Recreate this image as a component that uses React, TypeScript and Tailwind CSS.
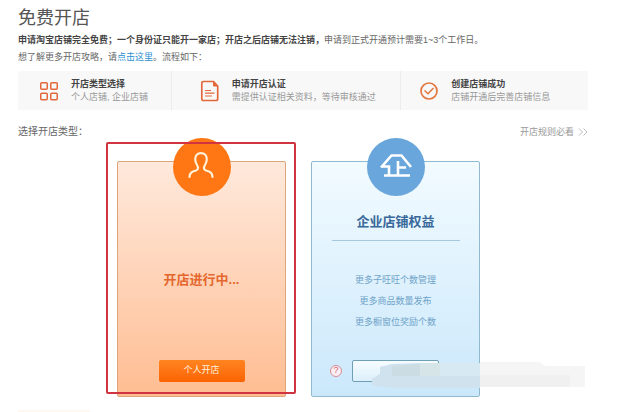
import type { ReactNode } from "react";

function GridIcon() {
  return (
    <svg viewBox="0 0 20 20" className="h-5 w-5 shrink-0" fill="none" stroke="#e2683c" strokeWidth="1.5">
      <rect x="1.75" y="1.75" width="6.5" height="6.5" rx="1" />
      <rect x="11.75" y="1.75" width="6.5" height="6.5" rx="1" />
      <rect x="1.75" y="12.25" width="6.5" height="6.5" rx="1" />
      <rect x="11.75" y="12.25" width="6.5" height="6.5" rx="1" />
    </svg>
  );
}

function DocumentIcon() {
  return (
    <svg viewBox="0 0 20 22" className="h-[22px] w-5 shrink-0" fill="none" stroke="#e2683c" strokeWidth="1.7">
      <path d="M13.5 1.5H3.5Q1.8 1.5 1.8 3.2V18.8Q1.8 20.5 3.5 20.5H16Q17.7 20.5 17.7 18.8V6Z" />
      <path d="M13.5 1.5V6H17.7Z" fill="#e2683c" strokeWidth="1" />
      <path d="M5 10.5H11M5 13.2H14.5M5 16H12" strokeWidth="1.2" />
    </svg>
  );
}

function DoneIcon() {
  return (
    <svg viewBox="0 0 20 20" className="h-5 w-5 shrink-0" fill="none" stroke="#e2763f" strokeWidth="1.7">
      <circle cx="10" cy="10" r="8" />
      <path d="M5.5 9.5L9 12.8L14.5 7" strokeWidth="1.5" />
    </svg>
  );
}

function Step({ icon, title, text, className }: { icon: ReactNode; title: string; text: string; className: string }) {
  return (
    <li className={`flex items-center border-[#ececec] ${className}`}>
      {icon}
      <div className="text-[9px] leading-[13px] whitespace-nowrap">
        <h2 className="font-bold text-[#444]">{title}</h2>
        <p className="text-[#999]">{text}</p>
      </div>
    </li>
  );
}

function Badge({ className, children }: { className: string; children: ReactNode }) {
  return (
    <div className={`-mt-6 flex size-[58px] shrink-0 items-center justify-center rounded-full ${className}`}>
      {children}
    </div>
  );
}

export default function App() {
  return (
    <main className="bg-white pt-2 pr-[53px] pl-[18px] font-['Liberation_Sans','Noto_Sans_CJK_SC',sans-serif] text-[9px] text-[#666]">
      <h1 className="text-lg leading-5 text-[#555]">免费开店</h1>
      <div className="mt-1 leading-[17px]">
        <p>
          <strong className="text-[#444]">申请淘宝店铺完全免费；一个身份证只能开一家店；开店之后店铺无法注销，</strong>
          申请到正式开通预计需要1~3个工作日。
        </p>
        <p>
          想了解更多开店攻略，请
          <a href="#guide" className="text-[#2b8fcf]">点击这里</a>
          。流程如下：
        </p>
      </div>

      <ol className="mt-[5px] grid h-[39px] grid-cols-[154fr_230fr_187fr] bg-[#f8f8f8]">
        <Step icon={<GridIcon />} title="开店类型选择" text="个人店铺, 企业店铺" className="gap-3 border-r pl-[21px]" />
        <Step icon={<DocumentIcon />} title="申请开店认证" text="需提供认证相关资料，等待审核通过" className="gap-3 border-r pl-7" />
        <Step icon={<DoneIcon />} title="创建店铺成功" text="店铺开通后完善店铺信息" className="gap-3 pl-[18px]" />
      </ol>

      <div className="mt-3 flex items-center justify-between leading-5">
        <p className="text-[10px]">选择开店类型：</p>
        <a href="#rules" className="flex items-center gap-1 text-[#999]">
          开店规则必看
          <svg viewBox="0 0 10 8" className="h-2 w-[10px]" fill="none" stroke="#bbb">
            <path d="M1 .5L4.5 4L1 7.5M5.5 .5L9 4L5.5 7.5" />
          </svg>
        </a>
      </div>

      <div className="mt-[19px] grid grid-cols-[169px_169px] gap-[25px] pl-[99px]">
        <section className="relative flex h-[236px] flex-col items-center rounded-xs border border-[#dda57c] bg-linear-to-b from-[#ffe9dc] to-[#ffbd92]">
          <Badge className="bg-[#fe7714]">
            <svg viewBox="0 0 26 28" className="mr-[2px] mb-1 h-7 w-[26px]" fill="none" stroke="#fff1d8" strokeWidth="2.2" strokeLinecap="round">
              <path d="M1.5 26C1.5 21 5 20.5 8 19.5C10.5 18.5 10.5 16.500 9 14C7.500 11.500 7.200 10 7.200 8C7.200 4.500 9.500 2.200 13 2.200S18.800 4.500 18.800 8C18.800 10 18.500 11.500 17 14C15.500 16.500 15.500 18.500 18 19.500C21 20.500 24.500 21 24.500 26" />
            </svg>
          </Badge>
          <p className="mt-[74px] text-[13px] leading-5 font-bold text-[#e4672f]">开店进行中...</p>
          <button type="button" className="mt-auto mb-[14px] h-[22px] w-[86px] rounded-xs bg-linear-to-b from-[#ff8420] to-[#fb6300] text-[#fff0dc]">
            个人开店
          </button>
          <div className="pointer-events-none absolute -top-5 -right-[11px] bottom-[2px] -left-[12px] rounded-xs border-2 border-[#cf3440]" />
        </section>

        <section className="relative flex h-[236px] flex-col items-center rounded-xs border border-[#93b9d0] bg-linear-to-b from-[#f2fbff] to-[#cbe8fb]">
          <Badge className="bg-[#69a6db]">
            <svg viewBox="0 0 32 26" className="mb-1 h-[26px] w-8" fill="none" stroke="#fff" strokeWidth="2.6">
              <path d="M1 15.5L11.5 3.5H21.500L31 15M2 14.500H9V23M18 9V23M18 15.500H26M4 23.500H30" />
            </svg>
          </Badge>
          <h2 className="mt-4 text-[13px] leading-5 font-bold text-[#38699a]">企业店铺权益</h2>
          <hr className="mt-2 w-32 border-[#a5c8dc]" />
          <ul className="mt-[29px] text-center leading-[21px] text-[#6fa3c9]">
            <li>更多子旺旺个数管理</li>
            <li>更多商品数量发布</li>
            <li>更多橱窗位奖励个数</li>
          </ul>
          <div className="mt-auto mb-[14px] flex w-full items-center gap-[10px] pl-[18px]">
            <button type="button" aria-label="帮助" className="flex size-3 items-center justify-center rounded-full border border-[#d58d98] bg-[#fbeef2] text-[#cf6574]">
              ?
            </button>
            <button type="button" aria-label="企业开店" className="h-[22px] w-[87px] rounded-xs border border-[#6f9fb5] bg-linear-to-b from-[#f6fcff] to-[#dceffb]" />
          </div>
          <svg viewBox="0 0 214 26" className="absolute top-[200px] left-[60px] h-[26px] w-[214px]" aria-hidden="true">
            <path d="M8 5L20 2L48 1H108V26H20L0 23V17L8 12Z" fill="#cfe2ee" />
            <path d="M20 4L48 2V14H20Z" fill="#cbdde3" />
            <path d="M48 1H68V14H48Z" fill="#d5e5e8" />
            <path d="M68 1H108V14H68Z" fill="#d7e9f2" />
            <path d="M108 0H168L173 4H213V25H108Z" fill="#f5f5f5" />
            <path d="M108 13H198V25H108Z" fill="#f0f0f0" />
          </svg>
        </section>
      </div>
      <div className="mt-[13px] h-[2px] w-[72px] bg-[#fff8f0]" />
    </main>
  );
}
